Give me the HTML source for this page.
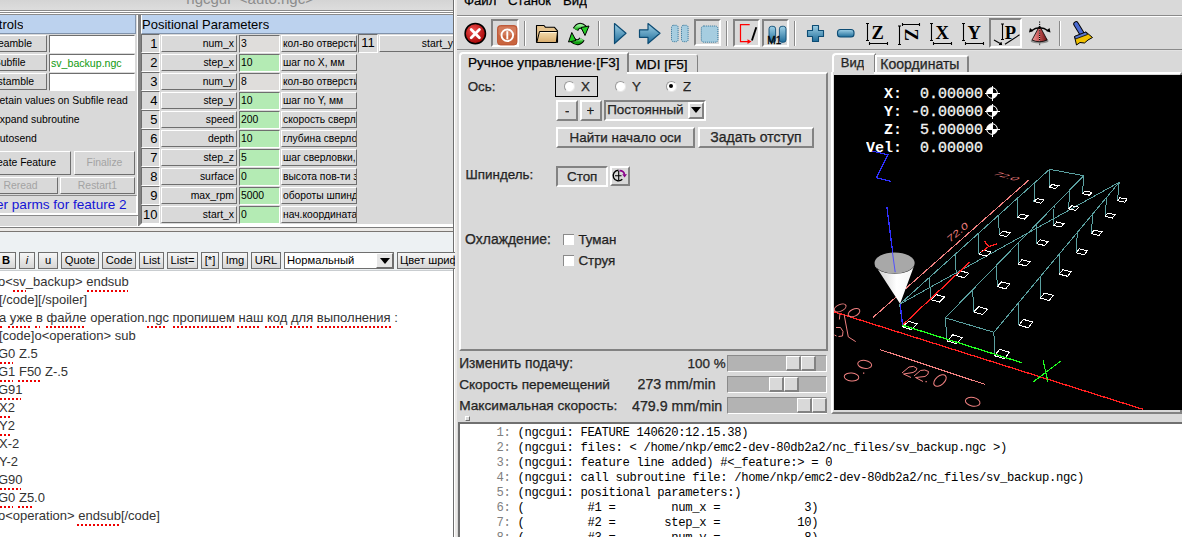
<!DOCTYPE html>
<html><head><meta charset="utf-8"><style>
*{box-sizing:border-box;margin:0;padding:0}
html,body{width:1182px;height:537px;overflow:hidden}
body{position:relative;background:#d9d9d9;font-family:"Liberation Sans",sans-serif;color:#000}
.a{position:absolute}
.r{position:absolute;border:1px solid;border-color:#fff #6e6e6e #6e6e6e #fff;background:#d9d9d9;white-space:nowrap;overflow:hidden}
.s{position:absolute;border:1px solid;border-color:#6e6e6e #fff #fff #6e6e6e;white-space:nowrap;overflow:hidden}
.t{position:absolute;white-space:pre;overflow:hidden}
.ng{font-size:10.4px}
.g{background:#b4ebb4}
.ro{background:#dfdddb}
.tb{position:absolute;top:252px;height:17px;border:1px solid #6f6f6f;background:linear-gradient(#f6f6f6,#d6d6d6);font-size:11.2px;line-height:15px;text-align:center;white-space:nowrap;overflow:hidden}
.mono{font-family:"Liberation Mono",monospace}
.ax{font-size:12.5px}
</style></head><body>
<div class="a" style="left:0px;top:0px;width:453px;height:10px;background:linear-gradient(#d4d4d4,#dddddd)"></div>
<div class="t" style="left:186.3px;top:-10px;font-size:15px;color:#8c8c8c;line-height:18px">ngcgui  &lt;auto.ngc&gt;</div>
<div class="a" style="left:0px;top:10px;width:453px;height:1px;background:#8a8a8a"></div>
<div class="a" style="left:0px;top:11px;width:453px;height:1px;background:#fff"></div>
<div class="a" style="left:0px;top:12px;width:453px;height:1px;background:#8a8a8a"></div>
<div class="a" style="left:0px;top:13px;width:453px;height:1px;background:#fff"></div>
<div class="a" style="left:0px;top:14px;width:453px;height:1px;background:#8a8a8a"></div>
<div class="a" style="left:0px;top:15px;width:136px;height:19px;background:#bcd2ee;border-bottom:1px solid #8193ab;border-right:1px solid #8193ab"></div>
<div class="t" style="left:-25px;top:16px;font-size:13px;line-height:18px">Controls</div>
<div class="r ng" style="left:-20px;top:35px;width:67px;height:17px;line-height:15px;text-align:right;padding-right:14px">Preamble</div>
<div class="s" style="left:49px;top:35px;width:86px;height:18px;background:#fff"></div>
<div class="r ng" style="left:-20px;top:54px;width:67px;height:17px;line-height:15px;text-align:right;padding-right:20.5px">Subfile</div>
<div class="s" style="left:49px;top:54px;width:86px;height:18px;background:#fff"><div class="t" style="left:1px;top:0;line-height:16px;color:#109a10;font-size:10.6px">sv_backup.ngc</div></div>
<div class="r ng" style="left:-20px;top:73px;width:67px;height:17px;line-height:15px;text-align:right;padding-right:12px">Postamble</div>
<div class="s" style="left:49px;top:73px;width:86px;height:18px;background:#fff"></div>
<div class="t ng" style="left:-4px;top:93px;line-height:16px">retain values on Subfile read</div>
<div class="t ng" style="left:-6px;top:112px;line-height:16px">expand subroutine</div>
<div class="t ng" style="left:-6px;top:131px;line-height:16px">autosend</div>
<div class="r ng" style="left:-20px;top:151px;width:91px;height:24px;line-height:22px;text-align:right;padding-right:14px">Create Feature</div>
<div class="r ng" style="left:74px;top:151px;width:61px;height:24px;line-height:22px;text-align:center;color:#a3a3a3">Finalize</div>
<div class="r ng" style="left:-20px;top:177px;width:78px;height:17px;line-height:15px;text-align:center;padding-left:3px;color:#a3a3a3">Reread</div>
<div class="r ng" style="left:60px;top:177px;width:75px;height:17px;line-height:15px;text-align:center;color:#a3a3a3">Restart1</div>
<div class="a" style="left:-2px;top:195px;width:140px;height:20px;background:#dcdcdc;border:1px solid;border-width:1px 2px 2px 1px;border-color:#8a8a8a #fff #fff #8a8a8a"></div>
<div class="t" style="left:-24.5px;top:196px;font-size:13.6px;line-height:17px;color:#1414d6">Enter parms for feature 2</div>
<div class="a" style="left:137px;top:15px;width:1px;height:211px;background:#fff"></div>
<div class="a" style="left:138px;top:15px;width:1px;height:211px;background:#828282"></div>
<div class="a" style="left:139px;top:15px;width:314px;height:211px;border-left:2px solid #828282;border-bottom:2px solid #fff"></div>
<div class="a" style="left:141px;top:15px;width:312px;height:19px;background:#bcd2ee;border-bottom:1px solid #8193ab;border-left:1px solid #fff"></div>
<div class="t" style="left:142px;top:16px;font-size:13px;line-height:18px">Positional Parameters</div>
<div class="s" style="left:141px;top:34px;width:19px;height:19px;font-size:13px;line-height:18px;text-align:right;padding-right:1.5px;background:#d9d9d9">1</div>
<div class="r ng" style="left:161px;top:35px;width:76px;height:17px;line-height:15px;text-align:right;padding-right:2px">num_x</div>
<div class="s ng ro" style="left:239px;top:35px;width:41px;height:18px;line-height:16px;padding-left:1px">3</div>
<div class="r" style="left:281px;top:35px;width:76px;height:17px;line-height:15px;padding-left:1px;font-size:10.3px">кол-во отверстий по X</div>
<div class="s" style="left:141px;top:53px;width:19px;height:19px;font-size:13px;line-height:18px;text-align:right;padding-right:1.5px;background:#d9d9d9">2</div>
<div class="r ng" style="left:161px;top:54px;width:76px;height:17px;line-height:15px;text-align:right;padding-right:2px">step_x</div>
<div class="s ng g" style="left:239px;top:54px;width:41px;height:18px;line-height:16px;padding-left:1px">10</div>
<div class="r" style="left:281px;top:54px;width:76px;height:17px;line-height:15px;padding-left:1px;font-size:10.3px">шаг по X, мм</div>
<div class="s" style="left:141px;top:72px;width:19px;height:19px;font-size:13px;line-height:18px;text-align:right;padding-right:1.5px;background:#d9d9d9">3</div>
<div class="r ng" style="left:161px;top:73px;width:76px;height:17px;line-height:15px;text-align:right;padding-right:2px">num_y</div>
<div class="s ng ro" style="left:239px;top:73px;width:41px;height:18px;line-height:16px;padding-left:1px">8</div>
<div class="r" style="left:281px;top:73px;width:76px;height:17px;line-height:15px;padding-left:1px;font-size:10.3px">кол-во отверстий по Y</div>
<div class="s" style="left:141px;top:91px;width:19px;height:19px;font-size:13px;line-height:18px;text-align:right;padding-right:1.5px;background:#d9d9d9">4</div>
<div class="r ng" style="left:161px;top:92px;width:76px;height:17px;line-height:15px;text-align:right;padding-right:2px">step_y</div>
<div class="s ng g" style="left:239px;top:92px;width:41px;height:18px;line-height:16px;padding-left:1px">10</div>
<div class="r" style="left:281px;top:92px;width:76px;height:17px;line-height:15px;padding-left:1px;font-size:10.3px">шаг по Y, мм</div>
<div class="s" style="left:141px;top:110px;width:19px;height:19px;font-size:13px;line-height:18px;text-align:right;padding-right:1.5px;background:#d9d9d9">5</div>
<div class="r ng" style="left:161px;top:111px;width:76px;height:17px;line-height:15px;text-align:right;padding-right:2px">speed</div>
<div class="s ng g" style="left:239px;top:111px;width:41px;height:18px;line-height:16px;padding-left:1px">200</div>
<div class="r" style="left:281px;top:111px;width:76px;height:17px;line-height:15px;padding-left:1px;font-size:10.3px">скорость сверловки</div>
<div class="s" style="left:141px;top:129px;width:19px;height:19px;font-size:13px;line-height:18px;text-align:right;padding-right:1.5px;background:#d9d9d9">6</div>
<div class="r ng" style="left:161px;top:130px;width:76px;height:17px;line-height:15px;text-align:right;padding-right:2px">depth</div>
<div class="s ng g" style="left:239px;top:130px;width:41px;height:18px;line-height:16px;padding-left:1px">10</div>
<div class="r" style="left:281px;top:130px;width:76px;height:17px;line-height:15px;padding-left:1px;font-size:10.3px">глубина сверловки</div>
<div class="s" style="left:141px;top:148px;width:19px;height:19px;font-size:13px;line-height:18px;text-align:right;padding-right:1.5px;background:#d9d9d9">7</div>
<div class="r ng" style="left:161px;top:149px;width:76px;height:17px;line-height:15px;text-align:right;padding-right:2px">step_z</div>
<div class="s ng g" style="left:239px;top:149px;width:41px;height:18px;line-height:16px;padding-left:1px">5</div>
<div class="r" style="left:281px;top:149px;width:76px;height:17px;line-height:15px;padding-left:1px;font-size:10.3px">шаг сверловки, мм</div>
<div class="s" style="left:141px;top:167px;width:19px;height:19px;font-size:13px;line-height:18px;text-align:right;padding-right:1.5px;background:#d9d9d9">8</div>
<div class="r ng" style="left:161px;top:168px;width:76px;height:17px;line-height:15px;text-align:right;padding-right:2px">surface</div>
<div class="s ng g" style="left:239px;top:168px;width:41px;height:18px;line-height:16px;padding-left:1px">0</div>
<div class="r" style="left:281px;top:168px;width:76px;height:17px;line-height:15px;padding-left:1px;font-size:10.3px">высота пов-ти заготовки</div>
<div class="s" style="left:141px;top:186px;width:19px;height:19px;font-size:13px;line-height:18px;text-align:right;padding-right:1.5px;background:#d9d9d9">9</div>
<div class="r ng" style="left:161px;top:187px;width:76px;height:17px;line-height:15px;text-align:right;padding-right:2px">max_rpm</div>
<div class="s ng g" style="left:239px;top:187px;width:41px;height:18px;line-height:16px;padding-left:1px">5000</div>
<div class="r" style="left:281px;top:187px;width:76px;height:17px;line-height:15px;padding-left:1px;font-size:10.3px">обороты шпинделя</div>
<div class="s" style="left:141px;top:205px;width:19px;height:19px;font-size:13px;line-height:18px;text-align:right;padding-right:1.5px;background:#d9d9d9">10</div>
<div class="r ng" style="left:161px;top:206px;width:76px;height:17px;line-height:15px;text-align:right;padding-right:2px">start_x</div>
<div class="s ng g" style="left:239px;top:206px;width:41px;height:18px;line-height:16px;padding-left:1px">0</div>
<div class="r" style="left:281px;top:206px;width:76px;height:17px;line-height:15px;padding-left:1px;font-size:10.3px">нач.координата X</div>
<div class="s" style="left:358px;top:34px;width:20px;height:19px;font-size:13px;line-height:16px;text-align:center;background:#d9d9d9">11</div>
<div class="r ng" style="left:379px;top:35px;width:90px;height:17px;line-height:15px;text-align:right;padding-right:15px">start_y</div>
<div class="a" style="left:0px;top:215px;width:138px;height:1px;background:#8a8a8a"></div>
<div class="a" style="left:0px;top:226px;width:453px;height:1px;background:#fff"></div>
<div class="a" style="left:0px;top:227px;width:453px;height:1px;background:#7d7d7d"></div>
<div class="a" style="left:0px;top:228px;width:453px;height:3px;background:#ebe9e6"></div>
<div class="a" style="left:0px;top:231px;width:453px;height:1px;background:#7a7672"></div>
<div class="a" style="left:0px;top:232px;width:453px;height:39px;background:#edf1f3"></div>
<div class="a" style="left:0px;top:270px;width:453px;height:1px;background:#c9cdd0"></div>
<div class="a" style="left:0px;top:271px;width:453px;height:266px;background:#fff"></div>
<div class="a" style="left:453px;top:0px;width:1px;height:537px;background:#6e6e6e"></div>
<div class="a" style="left:454px;top:0px;width:1px;height:537px;background:#fff"></div>
<div class="tb" style="left:-6px;width:22px;font-weight:bold;text-align:right;padding-right:5px">B</div>
<div class="tb" style="left:19px;width:16px;font-style:italic">i</div>
<div class="tb" style="left:38px;width:20px;">u</div>
<div class="tb" style="left:61px;width:38px;">Quote</div>
<div class="tb" style="left:102px;width:34px;">Code</div>
<div class="tb" style="left:139px;width:25px;">List</div>
<div class="tb" style="left:167px;width:31px;">List=</div>
<div class="tb" style="left:201px;width:18px;">[*]</div>
<div class="tb" style="left:222px;width:26px;">Img</div>
<div class="tb" style="left:251px;width:30px;">URL</div>
<div class="tb" style="left:284px;width:110px;background:#fff;text-align:left;padding-left:2px">Нормальный</div>
<div class="tb" style="left:397px;width:70px;text-align:left;padding-left:2px">Цвет шрифта</div>
<div class="a" style="left:376px;top:253px;width:17px;height:15px;background:#e6e6e6;border:1px solid;border-color:#fff #6e6e6e #6e6e6e #fff"></div>
<div class="a" style="left:380px;top:258px;width:0px;height:0px;border-left:5px solid transparent;border-right:5px solid transparent;border-top:6px solid #000"></div>
<div class="t" style="left:-2px;top:272.50px;font-size:13px;line-height:18px;color:#333;">o&lt;sv_backup&gt; endsub</div>
<div class="t" style="left:-1px;top:290.50px;font-size:13px;line-height:18px;color:#333;">[/code][/spoiler]</div>
<div class="t" style="left:-1px;top:308.50px;font-size:13px;line-height:18px;color:#333;">а уже в файле operation.ngc пропишем наш код для выполнения :</div>
<div class="t" style="left:-1px;top:326.50px;font-size:13px;line-height:18px;color:#333;">[code]o&lt;operation&gt; sub</div>
<div class="t" style="left:-2px;top:344.50px;font-size:13px;line-height:18px;color:#333;">G0 Z.5</div>
<div class="t" style="left:-2px;top:362.50px;font-size:13px;line-height:18px;color:#333;">G1 F50 Z-.5</div>
<div class="t" style="left:-2px;top:380.50px;font-size:13px;line-height:18px;color:#333;">G91</div>
<div class="t" style="left:-1px;top:398.50px;font-size:13px;line-height:18px;color:#333;">X2</div>
<div class="t" style="left:-1px;top:416.50px;font-size:13px;line-height:18px;color:#333;">Y2</div>
<div class="t" style="left:-1px;top:434.50px;font-size:13px;line-height:18px;color:#333;">X-2</div>
<div class="t" style="left:-1px;top:452.50px;font-size:13px;line-height:18px;color:#333;">Y-2</div>
<div class="t" style="left:-2px;top:470.50px;font-size:13px;line-height:18px;color:#333;">G90</div>
<div class="t" style="left:-2px;top:488.50px;font-size:13px;line-height:18px;color:#333;">G0 Z5.0</div>
<div class="t" style="left:-2px;top:506.50px;font-size:13px;line-height:18px;color:#333;">o&lt;operation&gt; endsub[/code]</div>
<div class="a" style="left:13px;top:290px;width:13px;height:2px;background:repeating-linear-gradient(90deg,#e00 0 2px,transparent 2px 4px)"></div>
<div class="a" style="left:87px;top:290px;width:41px;height:2px;background:repeating-linear-gradient(90deg,#e00 0 2px,transparent 2px 4px)"></div>
<div class="a" style="left:0px;top:326px;width:4px;height:2px;background:repeating-linear-gradient(90deg,#e00 0 2px,transparent 2px 4px)"></div>
<div class="a" style="left:8px;top:326px;width:22px;height:2px;background:repeating-linear-gradient(90deg,#e00 0 2px,transparent 2px 4px)"></div>
<div class="a" style="left:35px;top:326px;width:5px;height:2px;background:repeating-linear-gradient(90deg,#e00 0 2px,transparent 2px 4px)"></div>
<div class="a" style="left:46px;top:326px;width:38px;height:2px;background:repeating-linear-gradient(90deg,#e00 0 2px,transparent 2px 4px)"></div>
<div class="a" style="left:147px;top:326px;width:20px;height:2px;background:repeating-linear-gradient(90deg,#e00 0 2px,transparent 2px 4px)"></div>
<div class="a" style="left:173px;top:326px;width:60px;height:2px;background:repeating-linear-gradient(90deg,#e00 0 2px,transparent 2px 4px)"></div>
<div class="a" style="left:237px;top:326px;width:22px;height:2px;background:repeating-linear-gradient(90deg,#e00 0 2px,transparent 2px 4px)"></div>
<div class="a" style="left:265px;top:326px;width:20px;height:2px;background:repeating-linear-gradient(90deg,#e00 0 2px,transparent 2px 4px)"></div>
<div class="a" style="left:290px;top:326px;width:23px;height:2px;background:repeating-linear-gradient(90deg,#e00 0 2px,transparent 2px 4px)"></div>
<div class="a" style="left:317px;top:326px;width:74px;height:2px;background:repeating-linear-gradient(90deg,#e00 0 2px,transparent 2px 4px)"></div>
<div class="a" style="left:0px;top:362px;width:13px;height:2px;background:repeating-linear-gradient(90deg,#e00 0 2px,transparent 2px 4px)"></div>
<div class="a" style="left:0px;top:380px;width:13px;height:2px;background:repeating-linear-gradient(90deg,#e00 0 2px,transparent 2px 4px)"></div>
<div class="a" style="left:18px;top:380px;width:22px;height:2px;background:repeating-linear-gradient(90deg,#e00 0 2px,transparent 2px 4px)"></div>
<div class="a" style="left:0px;top:398px;width:21px;height:2px;background:repeating-linear-gradient(90deg,#e00 0 2px,transparent 2px 4px)"></div>
<div class="a" style="left:0px;top:416px;width:12px;height:2px;background:repeating-linear-gradient(90deg,#e00 0 2px,transparent 2px 4px)"></div>
<div class="a" style="left:0px;top:434px;width:12px;height:2px;background:repeating-linear-gradient(90deg,#e00 0 2px,transparent 2px 4px)"></div>
<div class="a" style="left:0px;top:488px;width:21px;height:2px;background:repeating-linear-gradient(90deg,#e00 0 2px,transparent 2px 4px)"></div>
<div class="a" style="left:0px;top:506px;width:13px;height:2px;background:repeating-linear-gradient(90deg,#e00 0 2px,transparent 2px 4px)"></div>
<div class="a" style="left:18px;top:506px;width:14px;height:2px;background:repeating-linear-gradient(90deg,#e00 0 2px,transparent 2px 4px)"></div>
<div class="a" style="left:77px;top:524px;width:42px;height:2px;background:repeating-linear-gradient(90deg,#e00 0 2px,transparent 2px 4px)"></div>
<div class="a" style="left:457px;top:0px;width:725px;height:537px;background:#d9d9d9"></div>
<div class="a" style="left:455px;top:0px;width:2px;height:537px;background:#ebe9e7"></div>
<div class="t" style="left:464px;top:-7.57px;font-size:13.2px;line-height:18px;color:#000;-webkit-text-stroke:0.25px #000;">Файл</div>
<div class="t" style="left:508px;top:-7.57px;font-size:13.2px;line-height:18px;color:#000;-webkit-text-stroke:0.25px #000;">Станок</div>
<div class="t" style="left:563px;top:-7.57px;font-size:13.2px;line-height:18px;color:#000;-webkit-text-stroke:0.25px #000;">Вид</div>
<div class="a" style="left:457px;top:15px;width:725px;height:1px;background:#8a8a8a"></div>
<div class="a" style="left:457px;top:16px;width:725px;height:1px;background:#fff"></div>
<div class="a" style="left:457px;top:49px;width:725px;height:1px;background:#8a8a8a"></div>
<div class="a" style="left:457px;top:50px;width:725px;height:1px;background:#e2e2e2"></div>
<div class="a" style="left:491px;top:19px;width:28px;height:28px;border:2px solid;border-color:#828282 #fff #fff #828282;background:#d9d9d9"></div>
<div class="a" style="left:694px;top:19px;width:27px;height:27px;border:2px solid;border-color:#828282 #fff #fff #828282;background:#d9d9d9"></div>
<div class="a" style="left:733px;top:19px;width:27px;height:28px;border:2px solid;border-color:#828282 #fff #fff #828282;background:#d9d9d9"></div>
<div class="a" style="left:762px;top:19px;width:27px;height:28px;border:2px solid;border-color:#828282 #fff #fff #828282;background:#d9d9d9"></div>
<div class="a" style="left:989px;top:18px;width:33px;height:30px;border:2px solid;border-color:#828282 #fff #fff #828282;background:#d9d9d9"></div>
<div class="a" style="left:524px;top:21px;width:1px;height:25px;background:#8a8a8a"></div>
<div class="a" style="left:525px;top:21px;width:1px;height:25px;background:#fff"></div>
<div class="a" style="left:598px;top:21px;width:1px;height:25px;background:#8a8a8a"></div>
<div class="a" style="left:599px;top:21px;width:1px;height:25px;background:#fff"></div>
<div class="a" style="left:726px;top:21px;width:1px;height:25px;background:#8a8a8a"></div>
<div class="a" style="left:727px;top:21px;width:1px;height:25px;background:#fff"></div>
<div class="a" style="left:794px;top:21px;width:1px;height:25px;background:#8a8a8a"></div>
<div class="a" style="left:795px;top:21px;width:1px;height:25px;background:#fff"></div>
<div class="a" style="left:1059px;top:21px;width:1px;height:25px;background:#8a8a8a"></div>
<div class="a" style="left:1060px;top:21px;width:1px;height:25px;background:#fff"></div>
<svg class="a" style="left:456px;top:16px;overflow:visible" width="726" height="34" viewBox="456 16 726 34">
<defs>
<radialGradient id="rg" cx="0.4" cy="0.35" r="0.7"><stop offset="0" stop-color="#f05050"/><stop offset="1" stop-color="#a00000"/></radialGradient>
<linearGradient id="bg1" x1="0" y1="0" x2="0" y2="1"><stop offset="0" stop-color="#9fd0e6"/><stop offset="1" stop-color="#1f6d9a"/></linearGradient>
<linearGradient id="gg" x1="0" y1="0" x2="0" y2="1"><stop offset="0" stop-color="#8ef08e"/><stop offset="1" stop-color="#10a010"/></linearGradient>
<linearGradient id="fg" x1="0" y1="0" x2="0" y2="1"><stop offset="0" stop-color="#f4dcae"/><stop offset="1" stop-color="#d8ac6c"/></linearGradient>
<pattern id="chk" width="2" height="2" patternUnits="userSpaceOnUse"><rect width="2" height="2" fill="#d9d9d9"/><rect width="1" height="1" fill="#4a90b8"/><rect x="1" y="1" width="1" height="1" fill="#9cc8dc"/></pattern>
<linearGradient id="cg" x1="0" y1="0" x2="1" y2="0"><stop offset="0" stop-color="#c05050"/><stop offset="0.5" stop-color="#f0b0a0"/><stop offset="1" stop-color="#904040"/></linearGradient>
</defs>
<!-- estop -->
<circle cx="475.3" cy="33.6" r="10.2" fill="url(#rg)" stroke="#000" stroke-width="1.5"/>
<path d="M471.2 29.5 L479.4 37.7 M479.4 29.5 L471.2 37.7" stroke="#fff" stroke-width="2.8" stroke-linecap="round"/>
<!-- power -->
<rect x="497.5" y="25.5" width="19.5" height="19.5" rx="3" fill="#c8643e" stroke="#b84a2a" stroke-width="0.8"/>
<rect x="498.5" y="26.5" width="17.5" height="9" rx="2" fill="#e09a80" opacity="0.45"/>
<circle cx="507.3" cy="35.3" r="5.8" fill="none" stroke="#fff" stroke-width="1.9"/>
<path d="M507.3 31.2 V39.4" stroke="#fff" stroke-width="1.9"/>
<!-- folder -->
<path d="M536.5 25.5 h7.5 l1.5 1.8 h9 l3 3.5 v11.5 h-21 z" fill="#e6c48e" stroke="#000" stroke-width="1.1" stroke-linejoin="round"/>
<path d="M539.5 31.5 h18 l-1.2 11 h-19.5 z" fill="url(#fg)" stroke="#000" stroke-width="1" stroke-linejoin="round"/>
<path d="M540 32.5 h16.5" stroke="#fff3d8" stroke-width="1"/>
<!-- reload -->
<g fill="none" stroke-linecap="butt">
<path d="M575.5 29.5 Q579 23 584.5 28" stroke="#000" stroke-width="6"/>
<path d="M582 39 Q578.5 45 572.5 40" stroke="#000" stroke-width="6"/>
<path d="M575.5 29.5 Q579 23 584.5 28" stroke="url(#gg)" stroke-width="4"/>
<path d="M582 39 Q578.5 45 572.5 40" stroke="url(#gg)" stroke-width="4"/>
</g>
<path d="M581 27.5 L589 26 L585 35.5 Z" fill="#22cc22" stroke="#000" stroke-width="1" stroke-linejoin="round"/>
<path d="M576 40.5 L568.5 42 L571.8 32.5 Z" fill="#22cc22" stroke="#000" stroke-width="1" stroke-linejoin="round"/>
<!-- play -->
<path d="M614.5 23.5 L626 33.3 L614.5 43.5 Z" fill="url(#bg1)" stroke="#0d4c74" stroke-width="1.2" stroke-linejoin="round"/>
<!-- step -->
<path d="M639.5 29.8 H648 V23.5 L660 33.3 L648 43.5 V37.3 H639.5 Z" fill="url(#bg1)" stroke="#0d4c74" stroke-width="1.2" stroke-linejoin="round"/>
<!-- pause -->
<rect x="671.5" y="25.3" width="6.6" height="16.4" rx="2" fill="#a6cde0" stroke="#2a6f96" stroke-width="1" stroke-dasharray="1 1"/>
<rect x="681.5" y="25.3" width="6.6" height="16.4" rx="2" fill="#a6cde0" stroke="#2a6f96" stroke-width="1" stroke-dasharray="1 1"/>
<!-- stop -->
<rect x="701.3" y="26" width="16.6" height="16.2" rx="2.5" fill="#a6cde0" stroke="#2a6f96" stroke-width="1" stroke-dasharray="1 1"/>
<!-- block delete -->
<path d="M749.7 24.6 H740.5 V41.6 H748" fill="none" stroke="#ff0000" stroke-width="1.2"/>
<path d="M747.5 39.3 L751.5 41.6 L747.5 43.9 Z" fill="#f00"/>
<path d="M756.3 27.3 L751.9 40.5" stroke="#000" stroke-width="1.9"/>
<!-- M1 -->
<rect x="769" y="26.3" width="6.6" height="16" rx="2.5" fill="url(#bg1)" stroke="#0d4c74" stroke-width="0.9"/>
<rect x="779.4" y="26.3" width="6.6" height="16" rx="2.5" fill="url(#bg1)" stroke="#0d4c74" stroke-width="0.9"/>
<text x="767.3" y="43.9" font-family="Liberation Sans" font-size="11.5" fill="#000" stroke="#000" stroke-width="0.3" textLength="14" lengthAdjust="spacingAndGlyphs">M1</text>
<!-- plus -->
<path d="M812.5 25.5 h6 v5 h5 v6 h-5 v5 h-6 v-5 h-5 v-6 h5 z" fill="url(#bg1)" stroke="#0d4c74" stroke-width="1.1" stroke-linejoin="round"/>
<!-- minus -->
<rect x="837.5" y="29.5" width="16.5" height="7.5" rx="3" fill="url(#bg1)" stroke="#0d4c74" stroke-width="1.1"/>
<!-- view icons -->
<g stroke="#000" stroke-width="1.1" fill="none">
<path d="M867.5 23.5 v17 M866 23.5 h3 M866 40.5 h3 M869.5 43.5 h18 M869.5 42 v3 M887.5 42 v3"/>
<path d="M899.5 26 v18.5 M898 26 h3 M898 44.5 h3 M902.5 24.5 h17 M902.5 23 v3 M919.5 23 v3"/>
<path d="M931.5 23.5 v17 M930 23.5 h3 M930 40.5 h3 M933.5 43.5 h18 M933.5 42 v3 M951.5 42 v3"/>
<path d="M963.5 23.5 v17 M962 23.5 h3 M962 40.5 h3 M965.5 43.5 h18 M965.5 42 v3 M983.5 42 v3"/>
<path d="M1002.5 24 v15.5 M1001 24 h3 M1001 39.5 h3 M994 40 L1001.5 44.3 M1005 44.3 L1019.5 34.8 M999 44.5 l2.5 0 l-0.5 -2.5"/>
</g>
<g font-family="Liberation Serif" font-weight="bold" fill="#000">
<text x="871.5" y="38.7" font-size="18.5">Z</text>
<text x="0" y="0" font-size="18.5" transform="translate(904.5 28.5) rotate(90)">Z</text>
<text x="935.5" y="38.7" font-size="18.5">X</text>
<text x="967.5" y="38.7" font-size="18.5">Y</text>
<text x="1004.8" y="38.7" font-size="18.5">P</text>
</g>
<!-- rotate cone -->
<defs><linearGradient id="cg2" x1="0" y1="0" x2="1" y2="0"><stop offset="0" stop-color="#f0a0a0"/><stop offset="0.5" stop-color="#c05050"/><stop offset="1" stop-color="#6a1010"/></linearGradient></defs>
<ellipse cx="1039.6" cy="41" rx="9" ry="2.5" fill="#000" opacity="0.35"/>
<path d="M1039.6 25.8 L1047.2 40 Q1039.6 43.5 1032 40 Z" fill="url(#cg2)" stroke="#000" stroke-width="0.8"/>
<path d="M1039.6 21.5 V46" stroke="#000" stroke-width="1.1" stroke-dasharray="1.2 1"/>
<path d="M1039.6 21.5 V46" stroke="#fff" stroke-width="0.6" stroke-dasharray="0 1.2 1 0" opacity="0.9"/>
<path d="M1031 31 Q1039.6 24.5 1048.5 31" fill="none" stroke="#000" stroke-width="1.3"/>
<path d="M1029 32.5 l1 -4.5 l3.5 3 z M1050.5 32.5 l-1 -4.5 l-3.5 3 z" fill="#000"/>
<!-- brush -->
<path d="M1076 24 L1081.5 33" stroke="#000" stroke-width="5.5" stroke-linecap="round"/>
<path d="M1076 24 L1081.5 33" stroke="#4a6ad0" stroke-width="3.6" stroke-linecap="round"/>
<path d="M1074.5 36.5 L1086 32 L1092.5 37.5 L1088 40 L1084.5 43 L1080 42.5 L1076.5 45 Z" fill="#f0c000" stroke="#000" stroke-width="1" stroke-linejoin="round"/>
<path d="M1074.5 36.5 L1086 32 L1087.5 34.5 L1075.5 39 Z" fill="#5a78d0" stroke="#000" stroke-width="0.8"/>
</svg>
<div class="a" style="left:459px;top:52px;width:170px;height:22px;border:2px solid;border-bottom:none;border-color:#fff #828282 #828282 #fff;border-top-left-radius:4px;background:#d9d9d9"></div>
<div class="a" style="left:629px;top:54px;width:69px;height:19px;border:1px solid;border-bottom:none;border-left:none;border-color:#fff #828282 #828282 #fff;border-top-right-radius:3px;background:#d9d9d9"></div>
<div class="t" style="left:468px;top:53.09px;font-size:13.6px;line-height:19px;color:#000;-webkit-text-stroke:0.25px #000;">Ручное управление·[F3]</div>
<div class="t" style="left:635.5px;top:55.09px;font-size:13.6px;line-height:19px;color:#000;-webkit-text-stroke:0.25px #000;">MDI [F5]</div>
<div class="a" style="left:459px;top:72px;width:369px;height:279px;border:2px solid;border-color:#fff #828282 #828282 #fff"></div>
<div class="a" style="left:461px;top:72px;width:166px;height:3px;background:#d9d9d9"></div>
<div class="t" style="left:467.7px;top:77.06px;font-size:13.4px;line-height:19px;color:#333;-webkit-text-stroke:0.25px #000;">Ось:</div>
<div class="a" style="left:555px;top:76px;width:43px;height:21px;border:1px solid #000"></div>
<div class="a" style="left:563.5px;top:80.6px;width:11px;height:11px;border-radius:50%;background:#fff;border:1px solid;border-color:#9a9a9a #e8e8e8 #e8e8e8 #9a9a9a"></div>
<div class="t" style="left:581px;top:76.56px;font-size:13.4px;line-height:19px;color:#333;-webkit-text-stroke:0.25px #000;">X</div>
<div class="a" style="left:614.5px;top:80.6px;width:11px;height:11px;border-radius:50%;background:#fff;border:1px solid;border-color:#9a9a9a #e8e8e8 #e8e8e8 #9a9a9a"></div>
<div class="t" style="left:632px;top:76.56px;font-size:13.4px;line-height:19px;color:#333;-webkit-text-stroke:0.25px #000;">Y</div>
<div class="a" style="left:665.5px;top:80.6px;width:11px;height:11px;border-radius:50%;background:#fff;border:1px solid;border-color:#9a9a9a #e8e8e8 #e8e8e8 #9a9a9a"></div>
<div class="a" style="left:669px;top:84.2px;width:4px;height:4px;border-radius:50%;background:#000"></div>
<div class="t" style="left:683px;top:76.56px;font-size:13.4px;line-height:19px;color:#333;-webkit-text-stroke:0.25px #000;">Z</div>
<div class="a" style="left:556px;top:100px;width:22px;height:21px;border:2px solid;border-color:#fff #828282 #828282 #fff;background:#d9d9d9;"></div>
<div class="t" style="left:565px;top:101.46px;font-size:13.4px;line-height:19px;color:#333;-webkit-text-stroke:0.25px #000;">-</div>
<div class="a" style="left:580px;top:100px;width:22px;height:21px;border:2px solid;border-color:#fff #828282 #828282 #fff;background:#d9d9d9;"></div>
<div class="t" style="left:586.5px;top:101.46px;font-size:13.4px;line-height:19px;color:#333;-webkit-text-stroke:0.25px #000;">+</div>
<div class="a" style="left:604px;top:100px;width:102px;height:21px;border:2px solid;border-color:#828282 #fff #fff #828282;background:#d9d9d9"></div>
<div class="t" style="left:607.2px;top:100.46px;font-size:13.4px;line-height:19px;color:#333;-webkit-text-stroke:0.25px #000;">Постоянный</div>
<div class="a" style="left:688px;top:102px;width:16px;height:17px;border:2px solid;border-color:#fff #828282 #828282 #fff;background:#d9d9d9;"></div>
<div class="a" style="left:691px;top:107px;width:0px;height:0px;border-left:5px solid transparent;border-right:5px solid transparent;border-top:6px solid #000"></div>
<div class="a" style="left:556px;top:127px;width:139px;height:21px;border:2px solid;border-color:#fff #828282 #828282 #fff;background:#d9d9d9;"></div>
<div class="t" style="left:569.6px;top:127.86px;font-size:13.4px;line-height:19px;color:#333;-webkit-text-stroke:0.25px #000;">Найти начало оси</div>
<div class="a" style="left:698px;top:127px;width:116px;height:21px;border:2px solid;border-color:#fff #828282 #828282 #fff;background:#d9d9d9;"></div>
<div class="t" style="left:710.3px;top:127.15px;font-size:14px;line-height:20px;color:#333;-webkit-text-stroke:0.25px #000;">Задать отступ</div>
<div class="t" style="left:465.5px;top:165.36px;font-size:13.4px;line-height:19px;color:#333;-webkit-text-stroke:0.25px #000;">Шпиндель:</div>
<div class="a" style="left:556px;top:166px;width:52px;height:21px;border:2px solid;border-color:#828282 #fff #fff #828282;background:#d9d9d9"></div>
<div class="t" style="left:567px;top:166.56px;font-size:13.4px;line-height:19px;color:#333;-webkit-text-stroke:0.25px #000;">Стоп</div>
<div class="a" style="left:610px;top:166px;width:20px;height:20px;border:2px solid;border-color:#fff #828282 #828282 #fff;background:#d9d9d9;"></div>
<svg class="a" style="left:610px;top:166px" width="20" height="20" viewBox="0 0 20 20"><path d="M8.5 4.3 A5.3 5.3 0 1 0 12.3 13.3" fill="none" stroke="#000" stroke-width="1.4"/><path d="M8.7 5 V14.5 M5 9.8 H11.5" stroke="#000" stroke-width="1.1"/><path d="M9.5 4.6 Q13.6 4.4 14.6 8.6" fill="none" stroke="#8a008a" stroke-width="1.6"/><path d="M12.2 8.2 L17 8.2 L14.6 11.6 Z" fill="#8a008a"/></svg>
<div class="t" style="left:465.1px;top:228.87px;font-size:13.95px;line-height:20px;color:#333;-webkit-text-stroke:0.25px #000;">Охлаждение:</div>
<div class="a" style="left:563px;top:234px;width:11px;height:11px;background:#fff;border-top:1px solid #8a8a8a;border-left:1px solid #8a8a8a"></div>
<div class="t" style="left:578.4px;top:229.66px;font-size:13.4px;line-height:19px;color:#333;-webkit-text-stroke:0.25px #000;">Туман</div>
<div class="a" style="left:563px;top:255px;width:11px;height:11px;background:#fff;border-top:1px solid #8a8a8a;border-left:1px solid #8a8a8a"></div>
<div class="t" style="left:578.4px;top:250.66px;font-size:13.4px;line-height:19px;color:#333;-webkit-text-stroke:0.25px #000;">Струя</div>
<div class="t" style="left:459.2px;top:353.94px;font-size:13.75px;line-height:19px;color:#333;-webkit-text-stroke:0.25px #000;">Изменить подачу:</div>
<div class="t" style="left:687.6px;top:354.06px;font-size:13.4px;line-height:19px;color:#333;-webkit-text-stroke:0.25px #000;">100 %</div>
<div class="t" style="left:459.2px;top:374.79px;font-size:13.6px;line-height:19px;color:#333;-webkit-text-stroke:0.25px #000;">Скорость перемещений</div>
<div class="t" style="left:637.5px;top:374.08px;font-size:14.2px;line-height:20px;color:#333;-webkit-text-stroke:0.25px #000;">273 mm/min</div>
<div class="t" style="left:459.2px;top:396.25px;font-size:13.7px;line-height:19px;color:#333;-webkit-text-stroke:0.25px #000;">Максимальная скорость:</div>
<div class="t" style="left:632px;top:395.56px;font-size:14.25px;line-height:20px;color:#333;-webkit-text-stroke:0.25px #000;">479.9 mm/min</div>
<div class="a" style="left:727px;top:355px;width:100px;height:17px;background:#b3b3b3;border:1px solid;border-color:#8a8a8a #fff #fff #8a8a8a"></div>
<div class="a" style="left:785.5px;top:356px;width:15px;height:15px;background:#d9d9d9;border:solid;border-width:1px 2px 2px 1px;border-color:#fff #828282 #828282 #fff"></div>
<div class="a" style="left:800.5px;top:356px;width:15px;height:15px;background:#d9d9d9;border:solid;border-width:1px 2px 2px 1px;border-color:#fff #828282 #828282 #fff"></div>
<div class="a" style="left:727px;top:376px;width:100px;height:17px;background:#b3b3b3;border:1px solid;border-color:#8a8a8a #fff #fff #8a8a8a"></div>
<div class="a" style="left:769px;top:377px;width:15px;height:15px;background:#d9d9d9;border:solid;border-width:1px 2px 2px 1px;border-color:#fff #828282 #828282 #fff"></div>
<div class="a" style="left:784px;top:377px;width:15px;height:15px;background:#d9d9d9;border:solid;border-width:1px 2px 2px 1px;border-color:#fff #828282 #828282 #fff"></div>
<div class="a" style="left:727px;top:397px;width:100px;height:17px;background:#b3b3b3;border:1px solid;border-color:#8a8a8a #fff #fff #8a8a8a"></div>
<div class="a" style="left:796.5px;top:398px;width:15px;height:15px;background:#d9d9d9;border:solid;border-width:1px 2px 2px 1px;border-color:#fff #828282 #828282 #fff"></div>
<div class="a" style="left:811.5px;top:398px;width:15px;height:15px;background:#d9d9d9;border:solid;border-width:1px 2px 2px 1px;border-color:#fff #828282 #828282 #fff"></div>
<div class="a" style="left:465px;top:416px;width:5px;height:5px;border:1px solid;border-color:#fff #6e6e6e #6e6e6e #fff"></div>
<div class="a" style="left:458px;top:422px;width:724px;height:115px;background:#fff;border-top:2px solid #707070;border-left:2px solid #707070"></div>
<div class="t mono" style="left:496.4px;top:425.25px;font-size:12.2px;line-height:17px;color:#808080;letter-spacing:-0.32px">1:</div>
<div class="t mono" style="left:517.5px;top:425.25px;font-size:12.2px;line-height:17px;color:#000;letter-spacing:-0.32px">(ngcgui: FEATURE 140620:12.15.38)</div>
<div class="t mono" style="left:496.4px;top:440.25px;font-size:12.2px;line-height:17px;color:#808080;letter-spacing:-0.32px">2:</div>
<div class="t mono" style="left:517.5px;top:440.25px;font-size:12.2px;line-height:17px;color:#000;letter-spacing:-0.32px">(ngcgui: files: &lt; /home/nkp/emc2-dev-80db2a2/nc_files/sv_backup.ngc &gt;)</div>
<div class="t mono" style="left:496.4px;top:455.25px;font-size:12.2px;line-height:17px;color:#808080;letter-spacing:-0.32px">3:</div>
<div class="t mono" style="left:517.5px;top:455.25px;font-size:12.2px;line-height:17px;color:#000;letter-spacing:-0.32px">(ngcgui: feature line added) #&lt;_feature:&gt; = 0</div>
<div class="t mono" style="left:496.4px;top:470.25px;font-size:12.2px;line-height:17px;color:#808080;letter-spacing:-0.32px">4:</div>
<div class="t mono" style="left:517.5px;top:470.25px;font-size:12.2px;line-height:17px;color:#000;letter-spacing:-0.32px">(ngcgui: call subroutine file: /home/nkp/emc2-dev-80db2a2/nc_files/sv_backup.ngc)</div>
<div class="t mono" style="left:496.4px;top:485.25px;font-size:12.2px;line-height:17px;color:#808080;letter-spacing:-0.32px">5:</div>
<div class="t mono" style="left:517.5px;top:485.25px;font-size:12.2px;line-height:17px;color:#000;letter-spacing:-0.32px">(ngcgui: positional parameters:)</div>
<div class="t mono" style="left:496.4px;top:500.25px;font-size:12.2px;line-height:17px;color:#808080;letter-spacing:-0.32px">6:</div>
<div class="t mono" style="left:517.5px;top:500.25px;font-size:12.2px;line-height:17px;color:#000;letter-spacing:-0.32px">(         #1 =        num_x =            3)</div>
<div class="t mono" style="left:496.4px;top:515.25px;font-size:12.2px;line-height:17px;color:#808080;letter-spacing:-0.32px">7:</div>
<div class="t mono" style="left:517.5px;top:515.25px;font-size:12.2px;line-height:17px;color:#000;letter-spacing:-0.32px">(         #2 =       step_x =           10)</div>
<div class="t mono" style="left:496.4px;top:530.25px;font-size:12.2px;line-height:17px;color:#808080;letter-spacing:-0.32px">8:</div>
<div class="t mono" style="left:517.5px;top:530.25px;font-size:12.2px;line-height:17px;color:#000;letter-spacing:-0.32px">(         #3 =        num_y =            8)</div>
<div class="a" style="left:832px;top:53px;width:44px;height:21px;border:2px solid;border-bottom:none;border-color:#fff #828282 #828282 #fff;border-top-left-radius:4px;background:#d9d9d9"></div>
<div class="a" style="left:875px;top:55px;width:94px;height:18px;border:2px solid;border-bottom:none;border-color:#fff #828282 #828282 #fff;border-top-right-radius:3px;background:#d9d9d9"></div>
<div class="t" style="left:840.8px;top:53.50px;font-size:13px;line-height:18px;color:#333;-webkit-text-stroke:0.25px #000;">Вид</div>
<div class="t" style="left:880.3px;top:53.63px;font-size:14.05px;line-height:20px;color:#333;-webkit-text-stroke:0.25px #000;">Координаты</div>
<div class="a" style="left:831px;top:72px;width:351px;height:342px;border:2px solid;border-color:#fff #828282 #828282 #fff"></div>
<div class="a" style="left:833px;top:72px;width:41px;height:3px;background:#d9d9d9"></div>
<div class="a" style="left:834px;top:75px;width:348px;height:335px;background:#000"></div>
<svg class="a" style="left:834px;top:75px" width="348" height="335" viewBox="834 75 348 335"><g shape-rendering="crispEdges"><path d="M834 311.8 L1142.7 409.2" stroke="#ff2020" stroke-width="1.3" fill="none"/><path d="M873 317.4 L1028.5 180.3 M879.7 349.5 L984.7 384.3" stroke="#f08080" stroke-width="1.1" fill="none"/><path d="M899.7 304.2 L902.7 326.9 M899.7 304.2 L929.0 277.8 M929.0 277.8 L931.2 299.7 M929.0 277.8 L955.0 254.5 M955.0 254.5 L956.4 275.6 M955.0 254.5 L978.0 233.7 M978.0 233.7 L978.9 254.1 M978.0 233.7 L998.7 215.1 M998.7 215.1 L999.2 234.9 M998.7 215.1 L1017.3 198.3 M1017.3 198.3 L1017.4 217.4 M1017.3 198.3 L1034.2 183.2 M1034.2 183.2 L1034.0 201.6 M1034.2 183.2 L1049.5 169.3 M1049.5 169.3 L1049.1 187.2 M1049.5 169.3 L1083.6 175.7 M1083.6 175.7 L1082.6 193.8 M1083.6 175.7 L1069.6 190.1 M1069.6 190.1 L1068.7 208.9 M1069.6 190.1 L1054.1 206.0 M1054.1 206.0 L1053.5 225.4 M1054.1 206.0 L1037.0 223.6 M1037.0 223.6 L1036.7 243.6 M1037.0 223.6 L1018.0 243.1 M1018.0 243.1 L1018.1 263.9 M1018.0 243.1 L996.6 265.1 M996.6 265.1 L997.2 286.6 M996.6 265.1 L972.6 289.8 M972.6 289.8 L973.8 312.0 M972.6 289.8 L945.3 317.8 M945.3 317.8 L947.2 340.9 M945.3 317.8 L993.9 332.3 M993.9 332.3 L994.6 355.7 M993.9 332.3 L1018.8 302.4 M1018.8 302.4 L1018.9 325.1 M1018.8 302.4 L1040.7 276.2 M1040.7 276.2 L1040.3 298.1 M1040.7 276.2 L1060.0 253.1 M1060.0 253.1 L1059.2 274.2 M1060.0 253.1 L1077.3 232.5 M1077.3 232.5 L1076.2 252.9 M1077.3 232.5 L1092.7 214.0 M1092.7 214.0 L1091.3 233.7 M1092.7 214.0 L1106.6 197.4 M1106.6 197.4 L1105.1 216.4 M1106.6 197.4 L1119.2 182.3 M1119.2 182.3 L1117.5 200.7 M1119.2 182.3 L899.7 304.2" stroke="#5aa0a0" stroke-width="1" fill="none"/><path d="M902.7 326.9 L911.4 329.6 L917.3 323.9 L908.6 321.2 L902.7 326.9 M931.2 299.7 L939.5 302.1 L944.7 297.0 L936.4 294.7 L931.2 299.7 M956.4 275.6 L964.4 277.8 L969.0 273.2 L961.1 271.1 L956.4 275.6 M978.9 254.1 L986.6 256.1 L990.8 252.0 L983.2 250.1 L978.9 254.1 M999.2 234.9 L1006.5 236.6 L1010.3 232.9 L1003.0 231.2 L999.2 234.9 M1017.4 217.4 L1024.5 219.0 L1027.9 215.7 L1020.8 214.2 L1017.4 217.4 M1034.0 201.6 L1040.8 203.1 L1043.9 200.0 L1037.1 198.7 L1034.0 201.6 M1049.1 187.2 L1055.6 188.5 L1058.5 185.8 L1051.9 184.5 L1049.1 187.2 M1082.6 193.8 L1089.4 195.2 L1092.0 192.3 L1085.2 191.0 L1082.6 193.8 M1068.7 208.9 L1075.9 210.4 L1078.7 207.2 L1071.6 205.8 L1068.7 208.9 M1053.5 225.4 L1060.9 227.0 L1064.0 223.6 L1056.7 222.0 L1053.5 225.4 M1036.7 243.6 L1044.5 245.5 L1047.9 241.6 L1040.2 239.8 L1036.7 243.6 M1018.1 263.9 L1026.1 265.9 L1030.0 261.7 L1022.0 259.7 L1018.1 263.9 M997.2 286.6 L1005.6 288.8 L1009.9 284.0 L1001.6 281.8 L997.2 286.6 M973.8 312.0 L982.6 314.6 L987.4 309.2 L978.7 306.7 L973.8 312.0 M947.2 340.9 L956.5 343.8 L962.0 337.6 L952.8 334.8 L947.2 340.9 M994.6 355.7 L1004.5 358.8 L1009.5 352.3 L999.7 349.3 L994.6 355.7 M1018.9 325.1 L1028.3 327.8 L1032.7 322.0 L1023.4 319.4 L1018.9 325.1 M1040.3 298.1 L1049.2 300.5 L1053.1 295.4 L1044.3 293.1 L1040.3 298.1 M1059.2 274.2 L1067.7 276.3 L1071.2 271.8 L1062.8 269.8 L1059.2 274.2 M1076.2 252.9 L1084.3 254.8 L1087.4 250.8 L1079.3 248.9 L1076.2 252.9 M1091.3 233.7 L1099.1 235.4 L1101.9 231.8 L1094.2 230.1 L1091.3 233.7 M1105.1 216.4 L1112.5 218.0 L1115.0 214.7 L1107.6 213.2 L1105.1 216.4 M1117.5 200.7 L1124.7 202.1 L1127.0 199.1 L1119.9 197.8 L1117.5 200.7" stroke="#ffffff" stroke-width="1" fill="none"/><path d="M902.5 325.2 L969.5 262.3" stroke="#ff2020" stroke-width="1.3" fill="none"/><path d="M902.5 325.2 L1021.8 362.7" stroke="#20ff20" stroke-width="1.3" fill="none"/><path d="M902.5 325.2 L900.2 303.9 M895.2 272.2 L886.9 207" stroke="#3030ff" stroke-width="1.3" fill="none"/><path d="M872 151 L887.8 154.8 L876.4 177.7 L891.3 181.4" stroke="#3030ff" stroke-width="1.1" fill="none"/><path d="M981.6 252.2 L988.6 246.6 L984.4 241 M988.6 246.6 L997 243.8" stroke="#ff2020" stroke-width="1.3" fill="none"/><path d="M1033 382 L1061.5 360.5 M1043 360 L1048 382" stroke="#20ff20" stroke-width="1.1" fill="none"/></g><defs><linearGradient id="cone" x1="0" y1="0" x2="1" y2="0"><stop offset="0" stop-color="#c8c8c8"/><stop offset="0.55" stop-color="#ffffff"/><stop offset="1" stop-color="#f4f4f4"/></linearGradient></defs><ellipse cx="894.6" cy="263.1" rx="20.1" ry="10.6" fill="#a8a8a8"/><path d="M895.2 272.2 L892.5 252.5" stroke="#5050ff" stroke-width="1" fill="none"/><path d="M874.6 264.5 A20.1 10.6 0 0 0 914.6 264.5 L900.1 303.7 Z" fill="url(#cone)"/><g fill="none" stroke="#f08080" stroke-width="1"><ellipse cx="840.2" cy="307.9" rx="6.2" ry="3.3" transform="rotate(-25 840.2 307.9)"/><ellipse cx="854" cy="312.7" rx="6.2" ry="3.5" transform="rotate(-25 854 312.7)"/><ellipse cx="864.7" cy="364.4" rx="7" ry="4" transform="rotate(8 864.7 364.4)"/><ellipse cx="851.5" cy="377" rx="7.3" ry="4" transform="rotate(5 851.5 377)"/><ellipse cx="940" cy="380.5" rx="7.3" ry="4.3" transform="rotate(-40 940 380.5)"/><ellipse cx="972.7" cy="401.8" rx="7.4" ry="4.3" transform="rotate(12 972.7 401.8)"/><path d="M839.9 314 L839.4 319.5 M844.1 314.6 L848.3 336.9 L855.7 341.6 M836 327.5 L840.5 327.5 L843 331.5 L842.5 336 L838.5 336.5 M836.5 336 L834.5 335"/><path d="M902 373 L909 367 Q914 365 917 368.5 Q917 371 913 372.5 L903.5 374 L911 377.5 M914 376 L920.5 370.5 Q925 369 928.5 371.5 Q929 374.5 925 376.5 L915.5 377.5 L923 381.5"/></g><path d="M863 372.5 h1.3 v1.3 h-1.3z M925.5 381 h1.3 v1.3 h-1.3z" fill="#f08080"/><text x="0" y="0" font-family="Liberation Sans" font-size="10.5" textLength="25" lengthAdjust="spacingAndGlyphs" fill="#f08080" transform="translate(949.5 243) rotate(-40) scale(1 0.85) skewX(-10)">72.0</text><text x="0" y="0" font-family="Liberation Sans" font-size="11" textLength="24" lengthAdjust="spacingAndGlyphs" fill="#f08080" transform="translate(992 174.5) rotate(15) scale(1 0.55) skewX(-35)">72.0</text></svg>
<div class="t mono" style="left:866px;top:83.80px;font-size:15px;line-height:21px;color:#fff;font-weight:bold">  X:</div>
<div class="t mono" style="left:866px;top:83.80px;font-size:15px;line-height:21px;color:#f2f2f2;-webkit-text-stroke:0.35px #f2f2f2">      0.00000</div>
<svg class="a" style="left:983.5px;top:84.6px" width="16" height="16" viewBox="0 0 16 16"><circle cx="8" cy="8" r="5.3" fill="#fff"/><path d="M8 8 V2.7 A5.3 5.3 0 0 1 13.3 8 Z M8 8 V13.3 A5.3 5.3 0 0 1 2.7 8 Z" fill="#000"/><path d="M8 0.5 V15.5 M0.5 8 H15.5" stroke="#fff" stroke-width="1" shape-rendering="crispEdges"/><circle cx="8" cy="8" r="5.3" fill="none" stroke="#fff" stroke-width="1"/></svg>
<div class="t mono" style="left:866px;top:101.80px;font-size:15px;line-height:21px;color:#fff;font-weight:bold">  Y:</div>
<div class="t mono" style="left:866px;top:101.80px;font-size:15px;line-height:21px;color:#f2f2f2;-webkit-text-stroke:0.35px #f2f2f2">     -0.00000</div>
<svg class="a" style="left:983.5px;top:102.6px" width="16" height="16" viewBox="0 0 16 16"><circle cx="8" cy="8" r="5.3" fill="#fff"/><path d="M8 8 V2.7 A5.3 5.3 0 0 1 13.3 8 Z M8 8 V13.3 A5.3 5.3 0 0 1 2.7 8 Z" fill="#000"/><path d="M8 0.5 V15.5 M0.5 8 H15.5" stroke="#fff" stroke-width="1" shape-rendering="crispEdges"/><circle cx="8" cy="8" r="5.3" fill="none" stroke="#fff" stroke-width="1"/></svg>
<div class="t mono" style="left:866px;top:119.70px;font-size:15px;line-height:21px;color:#fff;font-weight:bold">  Z:</div>
<div class="t mono" style="left:866px;top:119.70px;font-size:15px;line-height:21px;color:#f2f2f2;-webkit-text-stroke:0.35px #f2f2f2">      5.00000</div>
<svg class="a" style="left:983.5px;top:120.5px" width="16" height="16" viewBox="0 0 16 16"><circle cx="8" cy="8" r="5.3" fill="#fff"/><path d="M8 8 V2.7 A5.3 5.3 0 0 1 13.3 8 Z M8 8 V13.3 A5.3 5.3 0 0 1 2.7 8 Z" fill="#000"/><path d="M8 0.5 V15.5 M0.5 8 H15.5" stroke="#fff" stroke-width="1" shape-rendering="crispEdges"/><circle cx="8" cy="8" r="5.3" fill="none" stroke="#fff" stroke-width="1"/></svg>
<div class="t mono" style="left:866px;top:137.90px;font-size:15px;line-height:21px;color:#fff;font-weight:bold">Vel:</div>
<div class="t mono" style="left:866px;top:137.90px;font-size:15px;line-height:21px;color:#f2f2f2;-webkit-text-stroke:0.35px #f2f2f2">      0.00000</div>
</body></html>
